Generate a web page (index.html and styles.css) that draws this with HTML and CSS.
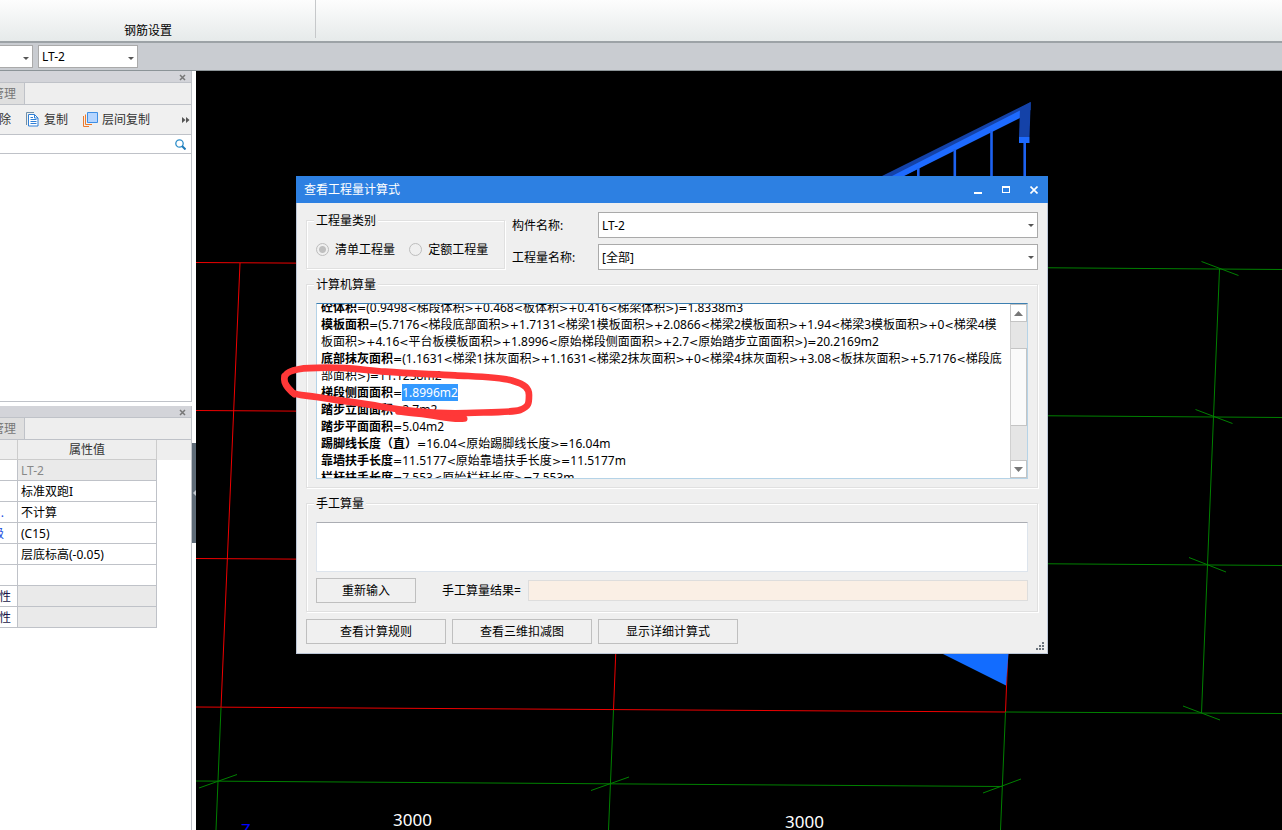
FILE: index.html
```html
<!DOCTYPE html>
<html lang="zh-CN">
<head>
<meta charset="utf-8">
<title>查看工程量计算式</title>
<link rel="stylesheet" href="styles.css">
</head>
<body>
<header class="ribbon">
  <div class="ribbon-group">钢筋设置</div>
</header>
<nav class="context-bar">
  <div class="combo combo-cut"><select aria-label="构件类型"><option></option></select></div>
  <div class="combo combo-member"><select aria-label="构件"><option>LT-2</option></select></div>
</nav>
<div class="workspace">
  <aside class="sidebar">
    <section class="panel">
      <div class="panel-bar">
        <button class="panel-close" aria-label="关闭"><svg width="7" height="7" viewBox="0 0 7 7"><path d="M1 1l5 5M6 1l-5 5"/></svg></button>
      </div>
      <div class="tabs"><button class="tab"><span>管理</span></button></div>
      <div class="tools">
        <button class="tool tool-delete"><span>除</span></button>
        <button class="tool tool-copy">
          <svg width="13" height="15" viewBox="0 0 13 15" fill="none">
            <path d="M.5 13V.5H8" stroke="#6f8fa8"/>
            <path d="M2.500 2.500h6l3.500 3.500v8h-9.500z" fill="#fff" stroke="#2f7fd6"/>
            <path d="M8.500 2.500V6H12M4.500 5.500h2.500M4.500 7.500h6M4.500 9.500h6M4.500 11.500h6" stroke="#2f7fd6"/>
          </svg>
          复制
        </button>
        <button class="tool">
          <svg width="15" height="15" viewBox="0 0 15 15" fill="none">
            <path d="M.5 4v10.500H6M2.500 2.500v10H9" stroke="#ec7a2c"/>
            <path d="M4.500.5h10v10h-10z" fill="#b5d5ff" stroke="#3f8fe4"/>
          </svg>
          层间复制
        </button>
        <button class="tool-more" aria-label="更多"><svg width="8" height="6" viewBox="0 0 8 6"><path d="M0 0l3.500 3L0 6zM4 0l3.500 3L4 6z" fill="#555"/></svg></button>
      </div>
      <div class="search">
        <input type="text" aria-label="搜索">
        <svg width="11" height="11" viewBox="0 0 11 11" fill="none"><circle cx="4.500" cy="4.500" r="3.700" stroke="#2f8fca" stroke-width="1.300"/><path d="M7 7l3.500 3.500" stroke="#1e7ab8" stroke-width="2"/></svg>
      </div>
      <div class="member-list"></div>
    </section>
    <section class="panel">
      <div class="panel-bar">
        <button class="panel-close" aria-label="关闭"><svg width="7" height="7" viewBox="0 0 7 7"><path d="M1 1l5 5M6 1l-5 5"/></svg></button>
      </div>
      <div class="tabs"><button class="tab"><span>管理</span></button></div>
      <div class="props-wrap">
        <table class="props">
          <thead><tr><th></th><th>属性值</th></tr></thead>
          <tbody>
            <tr><td></td><td class="locked">LT-2</td></tr>
            <tr><td></td><td>标准双跑I</td></tr>
            <tr><td><span class="key link">.</span></td><td>不计算</td></tr>
            <tr><td><span class="key link">级</span></td><td>(C15)</td></tr>
            <tr><td></td><td>层底标高(-0.05)</td></tr>
            <tr><td></td><td></td></tr>
            <tr><td><span class="key wide">性</span></td><td class="locked"></td></tr>
            <tr><td><span class="key wide">性</span></td><td class="locked"></td></tr>
          </tbody>
        </table>
      </div>
    </section>
  </aside>
  <div class="splitter">
    <button class="splitter-grip" aria-label="收起"><svg width="3" height="6" viewBox="0 0 3 6"><path d="M3 0v6L0 3z" fill="#c5cbd2"/></svg></button>
  </div>
  <main class="viewport">
    <svg class="drawing" viewBox="196 71 1086 759" preserveAspectRatio="xMinYMin slice">
      <g fill="none" stroke="#ee0000">
        <path d="M196 262.500L1010 267.500M196 410.500L1010 415.500M196 558.500L1010 563.500M196 707L1005.500 712"/>
        <path d="M240 263L221 707.500M631 265L613.500 710M1023 267L1005.500 712"/>
      </g>
      <g fill="none" stroke="#008000">
        <path d="M1010 267.500L1282 269.500M1010 415.500L1282 417.500M1010 563.500L1282 565.500M1005.500 712L1282 713.500M196 781L1002 786.500"/>
        <path d="M221 707.500L216 830M613.500 710L608.500 830M1005.500 712L1000.500 830M1219.500 269L1201.500 713"/>
        <path d="M1201.500 261.500l37 14M1195.500 409.500l37 14M1189 557.500l37 14.500M1183 706l37 14M199 788l38-13.500M591 790.500l38-13.500M983 793l38-14"/>
      </g>
      <path d="M881 176.500L1030.700 102V110L903 176.500z" fill="#1442a8"/>
      <path d="M891 176.500L1020 110.500V118L903 176.500z" fill="#1d6aff"/>
      <path d="M1020 108l10.700-6-1.200 35H1019z" fill="#1442a8"/>
      <path d="M1019 137h10.500v6H1019z" fill="#1d6aff"/>
      <path d="M1024.700 143v34M991.500 131v46M954.800 149v28M918.300 168v9" stroke="#1d62f0" stroke-width="2.600"/>
      <path d="M941 653h67.500L1006 685.500z" fill="#126cff"/>
      <text class="dim" x="393" y="826">3000</text>
      <text class="dim" x="785" y="828">3000</text>
      <text class="axis" x="241" y="836">Z</text>
    </svg>

    <section class="dialog" role="dialog" aria-label="查看工程量计算式">
      <div class="titlebar">
        <h1>查看工程量计算式</h1>
        <button class="win-btn" aria-label="最小化"><svg width="8" height="8" viewBox="0 0 8 8"><path d="M0 6h8v2H0z" fill="#fff"/></svg></button>
        <button class="win-btn" aria-label="最大化"><svg width="8" height="8" viewBox="0 0 8 8"><path d="M0 0h8v7H0zM1 2v4h6V2z" fill="#fff" fill-rule="evenodd"/></svg></button>
        <button class="win-btn" aria-label="关闭"><svg width="8" height="8" viewBox="0 0 8 8"><path d="M.5 .5l7 7M7.500 .5l-7 7" stroke="#fff" stroke-width="1.600"/></svg></button>
      </div>
      <div class="dialog-body">
        <div class="top-row">
          <fieldset class="group kind">
            <legend>工程量类别</legend>
            <label><input type="radio" name="kind" checked disabled>清单工程量</label>
            <label><input type="radio" name="kind" disabled>定额工程量</label>
          </fieldset>
          <div class="fields">
            <label for="member">构件名称:</label>
            <div class="combo"><select id="member"><option>LT-2</option></select></div>
            <label for="quantity">工程量名称:</label>
            <div class="combo"><select id="quantity"><option>[全部]</option></select></div>
          </div>
        </div>

        <fieldset class="group computed">
          <legend>计算机算量</legend>
          <div class="result-box">
            <div class="result-text">
              <p><b>砼体积</b><i>=</i>(0.9498<i>&lt;</i>梯段体积<i>&gt;+</i>0.468<i>&lt;</i>板体积<i>&gt;+</i>0.416<i>&lt;</i>梯梁体积<i>&gt;</i>)<i>=</i>1.8338m3</p>
              <p><b>模板面积</b><i>=</i>(5.7176<i>&lt;</i>梯段底部面积<i>&gt;+</i>1.7131<i>&lt;</i>梯梁1模板面积<i>&gt;+</i>2.0866<i>&lt;</i>梯梁2模板面积<i>&gt;+</i>1.94<i>&lt;</i>梯梁3模板面积<i>&gt;+</i>0<i>&lt;</i>梯梁4模<br>板面积<i>&gt;+</i>4.16<i>&lt;</i>平台板模板面积<i>&gt;+</i>1.8996<i>&lt;</i>原始梯段侧面面积<i>&gt;+</i>2.7<i>&lt;</i>原始踏步立面面积<i>&gt;</i>)<i>=</i>20.2169m2</p>
              <p><b>底部抹灰面积</b><i>=</i>(1.1631<i>&lt;</i>梯梁1抹灰面积<i>&gt;+</i>1.1631<i>&lt;</i>梯梁2抹灰面积<i>&gt;+</i>0<i>&lt;</i>梯梁4抹灰面积<i>&gt;+</i>3.08<i>&lt;</i>板抹灰面积<i>&gt;+</i>5.7176<i>&lt;</i>梯段底<br>部面积<i>&gt;</i>)<i>=</i>11.1238m2</p>
              <p><b>梯段侧面面积</b><i>=</i><mark>1.8996m2</mark></p>
              <p><b>踏步立面面积</b><i>=</i>2.7m2</p>
              <p><b>踏步平面面积</b><i>=</i>5.04m2</p>
              <p><b>踢脚线长度（直）</b><i>=</i>16.04<i>&lt;</i>原始踢脚线长度<i>&gt;=</i>16.04m</p>
              <p><b>靠墙扶手长度</b><i>=</i>11.5177<i>&lt;</i>原始靠墙扶手长度<i>&gt;=</i>11.5177m</p>
              <p><b>栏杆扶手长度</b><i>=</i>7.553<i>&lt;</i>原始栏杆长度<i>&gt;=</i>7.553m</p>
            </div>
            <div class="scrollbar">
              <button aria-label="向上"><svg width="9" height="5" viewBox="0 0 9 5"><path d="M0 5L4.500 0 9 5z" fill="#777"/></svg></button>
              <div class="track"><div class="thumb"></div></div>
              <button aria-label="向下"><svg width="9" height="5" viewBox="0 0 9 5"><path d="M0 0h9L4.500 5z" fill="#777"/></svg></button>
            </div>
          </div>
        </fieldset>

        <fieldset class="group manual">
          <legend>手工算量</legend>
          <textarea aria-label="手工算量"></textarea>
          <div class="manual-row">
            <button class="btn btn-reset">重新输入</button>
            <label for="manual-result">手工算量结果=</label>
            <input id="manual-result" type="text" readonly>
          </div>
        </fieldset>

        <div class="actions">
          <button class="btn">查看计算规则</button>
          <button class="btn">查看三维扣减图</button>
          <button class="btn">显示详细计算式</button>
        </div>
      </div>
      <svg class="size-grip" width="8" height="8" viewBox="0 0 8 8"><path d="M6 0h2v2H6zM3 3h2v2H3zM6 3h2v2H6zM0 6h2v2H0zM3 6h2v2H3zM6 6h2v2H6z" fill="#6d757d"/></svg>
      <svg class="pen-mark" width="260" height="70" viewBox="0 180 780 210" fill="none" stroke="#ff3838" stroke-linecap="round" stroke-linejoin="round">
        <path stroke-width="20" d="M30 242C40 222 90 218 150 218C230 217 270 226 330 230C400 236 470 237 540 241C610 245 680 246 715 258C750 268 762 280 762 300C762 325 762 335 735 345C710 354 620 351 540 355C450 354 380 345 320 335C250 322 180 316 125 306C90 300 65 302 52 292C38 278 22 262 30 242"/>
        <path stroke-width="16" d="M27 243C28 265 40 285 58 300"/>
        <path stroke-width="19" d="M370 350C420 356 460 358 490 365C520 370 545 374 568 371"/>
      </svg>
    </section>
  </main>
</div>
</body>
</html>
```

FILE: styles.css
```css
* { box-sizing: border-box; }

body {
  margin: 0;
  height: 100vh;
  display: flex;
  flex-direction: column;
  overflow: hidden;
  background: #fff;
  color: #000;
  font: 12px/17px "Noto Sans", "Noto Sans CJK SC", sans-serif;
}

button, input, select, textarea {
  font: inherit;
  color: inherit;
  margin: 0;
  padding: 0;
  border: 0;
  border-radius: 0;
  background: none;
  outline: 0;
}

svg { display: block; flex: none; }

/* Ribbon and context bar */
.ribbon {
  flex: none;
  height: 43px;
  background: linear-gradient(#fdfdfd, #e6eaea);
  border-bottom: 2px solid #9ca2a6;
}
.ribbon-group {
  width: 316px;
  height: 38px;
  padding: 22px 0 0 124px;
  border-right: 1px solid #c6c8ca;
}
.context-bar {
  flex: none;
  display: flex;
  gap: 5px;
  height: 28px;
  padding-top: 2px;
  background: #c9ccd1;
  border-bottom: 1px solid #8c9498;
}

.combo { position: relative; }
.combo select {
  display: block;
  appearance: none;
  width: 100%;
  height: 26px;
  padding: 0 16px 0 3px;
  background: #fff;
  border: 1px solid #aaa;
}
.combo::after {
  content: "";
  position: absolute;
  right: 4px;
  top: 50%;
  margin-top: -1px;
  border: 3px solid transparent;
  border-top-color: #555;
  border-bottom: 0;
  pointer-events: none;
}
.context-bar .combo select { height: 23px; }
.combo-cut { width: 33px; }
.combo-cut select { border-left: 0; }
.combo-member { width: 100px; }

/* Workspace */
.workspace { flex: 1; min-height: 0; display: flex; }
.sidebar {
  flex: none;
  width: 192px;
  display: grid;
  grid-template-rows: 331px 1fr;
  gap: 4px;
}
.panel {
  min-height: 0;
  display: flex;
  flex-direction: column;
  border-right: 1px solid #bfc2c8;
}
.panel:first-child { border-bottom: 1px solid #bfc2c8; }
.panel-bar {
  flex: none;
  display: flex;
  justify-content: flex-end;
  align-items: flex-end;
  height: 12px;
  padding: 0 5px 1px 0;
  background: #d3d4d9;
  border-bottom: 1px solid #bfc2c8;
}
.panel-close path { stroke: #777; stroke-width: 1.5; }
.tabs {
  flex: none;
  display: flex;
  height: 22px;
  background: #eee;
  border-bottom: 1px solid #bfc2c8;
}
.tab {
  display: flex;
  justify-content: flex-end;
  align-items: center;
  width: 25px;
  padding-right: 8px;
  overflow: hidden;
  background: #dfdfdf;
  border-right: 1px solid #bfc2c8;
  color: #777;
  white-space: nowrap;
}
.tools {
  flex: none;
  display: flex;
  align-items: center;
  gap: 15px;
  height: 30px;
  background: #f0f0f0;
  border-bottom: 1px solid #bfc2c8;
}
.tool { display: flex; align-items: center; gap: 4px; color: #333; white-space: nowrap; }
.tool-copy { gap: 5px; }
.tool-delete { justify-content: flex-end; width: 11px; overflow: hidden; }
.tool-more { margin: 0 1px 0 auto; }
.search {
  flex: none;
  display: flex;
  align-items: center;
  height: 19px;
  padding-right: 5px;
  border-bottom: 1px solid #bfc2c8;
}
.search input { flex: 1; min-width: 0; }
.member-list { flex: 1; }

.props-wrap { background: linear-gradient(#eee 20px, #fff 20px); }
.props {
  width: 157px;
  table-layout: fixed;
  border-collapse: separate;
  border-spacing: 0;
}
.props th, .props td {
  height: 21px;
  padding: 0 3px;
  overflow: hidden;
  border-right: 1px solid #bfc2c8;
  border-bottom: 1px solid #bfc2c8;
  font-weight: normal;
  text-align: left;
  white-space: nowrap;
}
.props th { height: 20px; text-align: center; color: #333; background: #eee; border-color: #ccc; }
.props th:first-child { width: 18px; }
.props td:first-child { padding: 0; }
.props .locked { background: #eaeaea; color: #888; }
.key { display: flex; justify-content: flex-end; width: 11px; color: #181848; }
.key.link { width: 4px; color: #1a4ee0; }

.splitter { flex: none; display: flex; width: 4px; padding-top: 372px; }
.splitter-grip {
  display: flex;
  align-items: center;
  justify-content: flex-end;
  width: 4px;
  height: 100px;
  background: #5f6c78;
}

/* Model viewport */
.viewport { position: relative; flex: 1; min-width: 0; background: #000; }
.drawing { position: absolute; width: 100%; height: 100%; }
.dim { fill: #fff; font-size: 17px; }
.axis { fill: #00f; font-size: 17px; }

/* Dialog */
.dialog {
  position: absolute;
  left: 100px;
  top: 105px;
  width: 752px;
  background: #efefef;
}
.titlebar {
  display: flex;
  align-items: center;
  gap: 20px;
  height: 27px;
  padding: 0 10px 0 8px;
  background: #2d80e2;
  color: #fff;
}
.titlebar h1 { flex: 1; margin: 0; font-size: 12px; font-weight: normal; }
.dialog-body {
  display: flex;
  flex-direction: column;
  gap: 7px;
  padding: 9px;
  border: 1px solid #bcc6d6;
  border-top: 0;
}

.group {
  min-width: 0;
  margin: 0;
  padding: 0 9px;
  border: 1px solid #e0e0e0;
  box-shadow: 1px 1px 0 #fff, inset 1px 1px 0 #fff;
}
.group legend { margin-left: -2px; padding: 0 2px; background: #efefef; }

.top-row { display: flex; gap: 7px; }
.kind { width: 199px; height: 57px; white-space: nowrap; }
.kind label { display: inline-flex; align-items: center; gap: 6px; margin: 12px 11px 0 0; }
.kind label + label { margin-right: 0; }
.kind input {
  appearance: none;
  width: 13px;
  height: 13px;
  border: 1px solid #bdbdbd;
  border-radius: 50%;
}
.kind input:checked { background: radial-gradient(circle, #bfbfbf 3px, transparent 4px); }
.fields {
  flex: 1;
  height: 57px;
  display: grid;
  grid-template-columns: 79px 1fr;
  gap: 6px 7px;
  align-items: center;
  align-content: start;
  white-space: nowrap;
}

.computed { padding-bottom: 8px; }
.result-box {
  display: flex;
  height: 176px;
  margin-top: 10px;
  overflow: hidden;
  background: #fff;
  border: 1px solid #b5d3e7;
  border-top-color: #3c7fb1;
}
.result-text { flex: 1; min-width: 0; margin-top: -5px; padding-left: 4px; white-space: nowrap; }
.result-text p { margin: 0; }
.result-text i { font: 11px/11px "DejaVu Sans", sans-serif; }
.result-text mark { display: inline-block; background: #3399ff; color: #fff; }

.scrollbar { flex: none; display: flex; flex-direction: column; width: 17px; }
.scrollbar button {
  flex: none;
  display: flex;
  align-items: center;
  justify-content: center;
  height: 18px;
  background: #fff;
  border: 1px solid #c4c4c4;
}
.track { flex: 1; padding-top: 26px; background: #e5e5e5; border-left: 1px solid #d0d0d0; }
.thumb { height: 78px; background: #fafafa; border: 1px solid #c4c4c4; border-left: 0; }

.manual { padding-bottom: 8px; }
.manual textarea {
  display: block;
  width: 100%;
  height: 50px;
  margin-top: 10px;
  background: #fff;
  border: 1px solid #dde4ec;
  border-top-color: #abadb3;
  resize: none;
}
.manual-row { display: flex; align-items: center; margin-top: 6px; }
.manual-row label { margin: 0 7px 0 26px; white-space: nowrap; }
.manual-row input { flex: 1; min-width: 0; height: 21px; background: #faefe5; border: 1px solid #ddd; }

.actions { display: flex; gap: 6px; }
.btn { width: 140px; height: 25px; background: #f0f0f0; border: 1px solid #bfbfbf; }
.btn-reset { width: 100px; }

.size-grip { position: absolute; right: 4px; bottom: 4px; }
.pen-mark { position: absolute; left: -21px; top: 179px; pointer-events: none; }
```
